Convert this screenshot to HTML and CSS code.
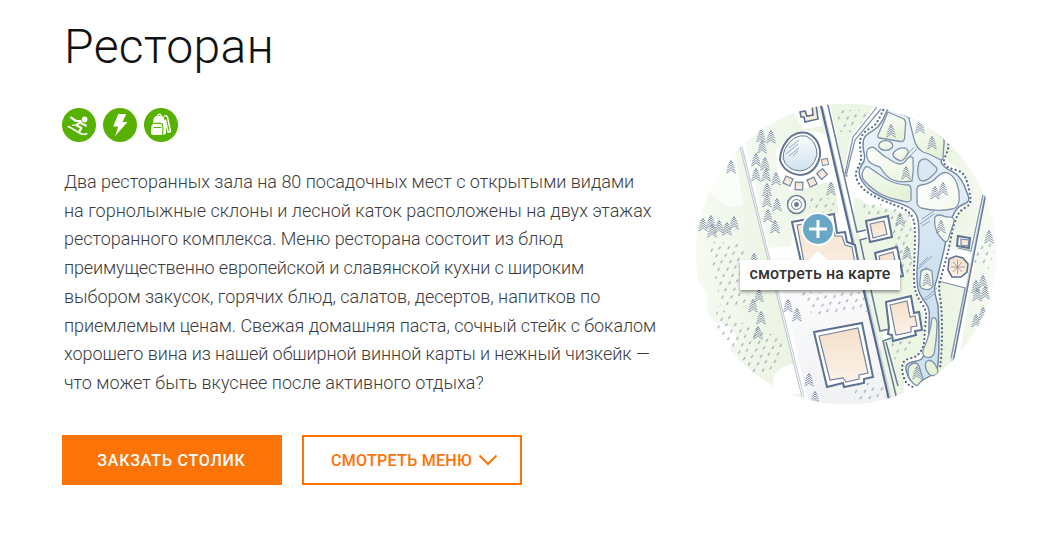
FILE: index.html
```html
<!DOCTYPE html>
<html lang="ru">
<head>
<meta charset="utf-8">
<title>Ресторан</title>
<link rel="stylesheet" href="styles.css">
</head>
<body>
<main class="page">
  <section class="info">
    <h1 class="title">Ресторан</h1>
    <div class="tags">
      <svg class="tag" viewBox="0 0 34 34"><circle cx="17" cy="17" r="17"/><circle class="w" cx="22.6" cy="11.4" r="2.8"/><path class="s" stroke-width="2.2" d="M9 9.500l5 3.500 4 0M18.800 13.500l-4.300 3.800 4.800 2.600-1.800 3.200M19.500 15.500l4.300 2"/><path class="s" stroke-width="1.7" d="M6.500 18.600c5 2 9 6.200 13.500 7.400 2 .6 3.500.5 4.700-.2"/><path class="s" stroke-width="1.200" d="M15 16.500l-4.500.8"/></svg>
      <svg class="tag" viewBox="0 0 34 34"><circle cx="17" cy="17" r="17"/><path class="w" d="M15.200 6h8l-3.700 8h5L12 28.300l3.200-9.800h-5z"/></svg>
      <svg class="tag" viewBox="0 0 34 34"><circle cx="17" cy="17" r="17"/><path class="s" stroke-width="1.500" d="M20.500 8q2.500-1 3.200 2l2.800 13.500-2.300.8-2.700-12"/><path class="w" d="M7.500 17.500l1.800-1.500V12q.5-3.500 3.700-4.200.5-2.300 2.500-2.300t2.200 2.300q2.300.7 2.800 3.700l1.700 6.500-.2 7.500-2.500 1.500H9q-2-.2-2-2z"/><path class="g" d="M9.800 19.500h7.500M9.800 15.500q4.500-1 8.700.5.800 5 .2 11M14.500 7.500h2"/></svg>
    </div>
    <div class="text">
      <div class="l1">Два ресторанных зала на 80 посадочных мест с открытыми видами</div>
      <div class="l2">на горнолыжные склоны и лесной каток расположены на двух этажах</div>
      <div class="l3">ресторанного комплекса. Меню ресторана состоит из блюд</div>
      <div class="l4">преимущественно европейской и славянской кухни с широким</div>
      <div class="l3">выбором закусок, горячих блюд, салатов, десертов, напитков по</div>
      <div class="l6">приемлемым ценам. Свежая домашняя паста, сочный стейк с бокалом</div>
      <div class="l6">хорошего вина из нашей обширной винной карты и нежный чизкейк —</div>
      <div class="l8">что может быть вкуснее после активного отдыха?</div>
    </div>
    <div class="actions">
      <a class="btn btn-fill">ЗАКЗАТЬ СТОЛИК</a>
      <a class="btn btn-line">СМОТРЕТЬ МЕНЮ<svg class="chev" viewBox="0 0 20 12"><path d="M1.500 1.500l8.500 8.500 8.500-8.500"/></svg></a>
    </div>
  </section>
  <aside class="map">
    <svg class="map-art" viewBox="695 104 302 300">
      <defs>
        <clipPath id="round"><circle cx="846.2" cy="254" r="150.5"/></clipPath>
        <linearGradient id="sand" x2="0" y2="1"><stop stop-color="#f5e0ca"/><stop offset="1" stop-color="#fbf2e8"/></linearGradient>
        <linearGradient id="water" x2="0" y2="1"><stop stop-color="#edf4f9"/><stop offset=".35" stop-color="#dfebf5"/><stop offset=".6" stop-color="#cde0ee"/><stop offset="1" stop-color="#cfe2ef"/></linearGradient>
        <linearGradient id="pool" x2="0" y2="1"><stop stop-color="#fafcfd"/><stop offset="1" stop-color="#cfe2ed"/></linearGradient>
        <linearGradient id="isle" x2="0.300" y2="1"><stop stop-color="#fff"/><stop offset="1" stop-color="#e6f2d8"/></linearGradient>
        <linearGradient id="plaza" x2="0" y2="1"><stop stop-color="#fff"/><stop offset="1" stop-color="#f1f2f4"/></linearGradient>
        <linearGradient id="lawn" x2="1" y2="0"><stop stop-color="#f6faf2"/><stop offset="1" stop-color="#eaf3e1"/></linearGradient>
        <linearGradient id="east" x2="1" y2="0"><stop stop-color="#e9f3df"/><stop offset="1" stop-color="#f9fcf7"/></linearGradient>
        <pattern id="grass" width="17" height="14" patternUnits="userSpaceOnUse" patternTransform="rotate(-8)"><path d="M2 5l2.200-2.500M10 4l2.200-2.500M6 12l2.200-2.500M14 11l2.200-2.500" stroke="#7f8ca5" stroke-width="1.100"/></pattern>
        <g id="tree"><path d="M-2.200 3q1.700-.7 2.200-2.500.5 1.800 2.200 2.500M-3.200 5.500q2.500-1 3.200-2.800.7 1.800 3.200 2.800M-3.800 8q3-1.200 3.800-3 .8 1.800 3.800 3M-4.300 10.500q3.400-1.200 4.300-3.200.9 2 4.300 3.200M-4.800 13q3.800-1.400 4.800-3.400 1 2 4.800 3.400"/></g>
        <g id="hut"><rect x="-3.800" y="-3.800" width="7.600" height="7.600"/></g>
      </defs>
      <g clip-path="url(#round)">
        <rect x="695" y="104" width="302" height="300" fill="#fff"/>
        <path fill="url(#plaza)" d="M773 248l75-10 46 166h-85z"/>
        <path fill="url(#lawn)" d="M695 190l45-55 64 269H695z"/>
        <path fill="#fbfdf9" d="M695 165q20 50 48 40l-9-60-25-10z"/>
        <path fill="#fff" d="M695 282q15 3 12 28l-12 15zM695 323c30-5 42 5 42 20-8 10-25 8-42 23zM773 381c0-10 12-16 20-17l8 30c-15 0-28-2-28-13z"/>
        <path fill="url(#lawn)" d="M744 136q40-35 77-32l18 110-44 4-4 28-22 2z"/>
        <path fill="#fff" d="M776 150q25-28 50-15l10 45-45 12-13-17zM789 104h28l6 22-20 3z"/>
        <path fill="#fff" d="M820 104h10l70 300h-12z"/>
        <path fill="#edf5e5" d="M830 104h46l-26 33-6 36zM854 199l9-7 15 10 28 10 8 18v60l14 35-5 28-18 9-2 44-12-6-12-44 2-14-8-6-20-88z"/>
        <path fill="#fff" d="M862 184q6 12 19 17l25 7-1 5-35-8-14-8z"/>
        <path fill="#fff" d="M858 232l10-4 1 9-7 3zM882 332l9-2 1 8-8 3z"/>
        <path fill="#edf5e5" d="M908 104l30 15 9 20-2 22-34-12z"/>
        <path fill="url(#east)" d="M948 138l36 37-1 20-12 56-23-2 10-37 15-15-13-27-17-12zM938 282l27 7-17 85-12-2zM985 200l15-10v110l-42 66z"/>
        <g fill="url(#grass)">
          <path d="M708 242h34l8 40-5 25h-24zM718 306l20 15 45 18-3 24-30 20-40-45zM837 110h36l-20 22-14 0zM860 202l15 0 36 12 2 62-14-3-6-35-12-5zM800 292h64l9 20-38 0-22 5zM889 341h27l-15 14-4 12zM856 383h27l5 18h-34zM970 260l8-15 20-5-10 30z"/>
          <path d="M809 198h24l2 12-25 5z"/>
        </g>
        <path class="thin" d="M740 147L802 397M742 147L804 397"/>
        <path class="faint" d="M823 108L891 399M984.500 196L951 362"/>
        <path class="thick" d="M820.700 104L890 404"/>
        <path class="line dark" d="M827.700 104L857 232l9-2M867 238l-7 2 20 91 10-2M891 338l-8 3L898 404M886 342l12 44"/>
        <path class="line" d="M877 107l-24 30-8 37M881 109l-26 31-9 36M848 176h-4"/>
        <path class="line dark" d="M986.700 189L953 362"/>
        <path class="line" d="M938 281l27 7-14 70M983 195l-12 56-13-3"/>
        <!-- river with islands -->
        <path fill="url(#water)" class="bank" d="M889 106C884 117 881 126 874 130S863 136 863 145 867 157 863 163 857 173 862 181 872 192 882 197 902 203 910 208 919 221 919 236 917 262 917 276 919 294 925 302 929 315 929 325 928 345 925 353 920 360 912 362 905 369 908 376 912 381 916 384L937 372C940 352 939 325 938 306 936 295 932 290 937 279L944 250 949 226C953 214 956 207 964 204S968 196 966 190 961 178 956 174 945 169 942 164 944 152 944 139L908 117z"/>
        <path class="dots" d="M885 106C880 117 877 125 871 128S859 136 860 146 862 157 860 163 853 173 858 182 870 194 880 199 900 206 907 211 915 223 915 236 914 262 914 276 916 295 922 304 926 316 925 328 925 345 921 351 915 357 908 359 901 370 904 378 909 384 914 388M948 140C950 150 945 155 944 160S947 168 956 170 967 180 969 190 972 204 965 208 957 215 953 228L948 252 940 281C938 290 940 294 941 304S943 345 940 368"/>
        <g class="isle">
          <path d="M888 112q9 4 16 7 2 2 1.500 6l-1 14q-1 3-4 2.500l-21-3.500q-3-1-1-4z"/>
          <path d="M910 116l28 14q7 4 6 12l-1 16q-1 3-4 1-9-5-16-7-7-4-9-13-2-8-5-20z"/>
          <ellipse cx="885.700" cy="145.500" rx="7" ry="4.800"/><path d="M894 152q5-5 11-4 5 2 2 7t-6 6q-11-4-7-9z"/>
          <path d="M868 149q5-4 9 1 6 6 12 9 7 5 11 5 4 0 7-5 4-4 6-1 1 12-1 23-12 2-19-1t-13-13q-10-2-13-9-1-6 1-9zM864 169q2-4 6-1 14 10 20 13 9 4 19 4 2 1 2 5v10q-2 3-8 1-16-3-24-8-11-7-16-14-2-5 1-10z"/>
          <path d="M917 189q0-3 4-4 10-1 16-8 6-6 11-4 7 4 9 11 3 8 2 17-1 7-7 8-15 3-31-1-4-2-4-6zM935 217q3-4 11 0 9-1 8 5l-6 18q-2 4-6-1-9-9-7-22zM921 271q5-4 11 0l1 15q-3 5-9 3-5 0-4-8zM932 318q4-2 5 5 0 14-3 31-3 5-8 3-4-1-3-7 7-14 9-32zM909 366q7-6 10 0l4 13-6 7q-12-7-8-20zM926 362q4-4 9 2 3 5 3 9-4 5-9 1-5-6-3-12z"/>
          <path class="lake" d="M919 162q4-5 9-2l8 7q3 3-3 8-8 8-13 5-4-5-1-18z"/>
        </g>
        <g stroke="#8da2b9" stroke-width="1"><path d="M922 219l12-8M920 224l14-10M922 226l8-5M919 266l9-9M918 269l14-13M920 273l7-6M908 154l6-7M910 156l7-7M922 301l15-13M926 300l8-6"/></g>
        <!-- buildings -->
        <g class="wall">
          <path d="M792 222l42-8 3 19 8-1 2 10 8 3 5 26-56 4z"/><path d="M814 332l48-9 11 54-9 2 0 4-20 4-1-4-16 4z"/><path d="M866 221l22-5 4 21-22 5z"/><path d="M875 253l22-6 6 29-22 5z"/><path d="M886 302l25-6 3 17 5-1 3 18-7 1 1 4-23 6-1-6-4-1 1-6z"/><path d="M958 236l12 2-1 10-12-2z"/>
        </g>
        <g class="house">
          <path class="oct" d="M800 112l5-1 2 5 6-1-1-10 4-1 2 15-13 3-1-5-3 0z"/>
          <path d="M797 225l34-6 4 17 7 0 3 9 7 2 4 22-50 4z"/><path d="M819 336l39-8 10 45-9 2 0 4-13 3-3-4-13 2z"/><path d="M870 224l14-3 3 13-14 4z"/><path d="M879 256l14-4 5 21-15 3z"/><path d="M890 305l17-4 3 16 5-1 2 10-6 1 0 5-15 3-1-4z"/><path d="M961 239l8 1-1 6-7-1z"/>
          <path class="oct" d="M949 259l7-3 7 2 5 6-1 8-6 5-9 0-4-7z"/>
          <use href="#hut" transform="translate(788 181) rotate(25)"/><use href="#hut" transform="translate(799 186) rotate(3)"/><use href="#hut" transform="translate(812 182) rotate(-25)"/><use href="#hut" transform="translate(822 174) rotate(-40)"/><use href="#hut" transform="translate(825 162) rotate(-12) scale(.8)"/>
        </g>
        <path stroke="#8c7f7c" stroke-width=".7" d="M957.500 260v14M951 267h14M953 262l9 10M953 272l9-10"/>
        <path d="M784 145q9-15 23-12 14 6 13 23-4 18-20 19-16-2-20-15 0-7 4-15z" fill="#fff" stroke="#657792" stroke-width="2"/><path d="M786 147q8-13 20-11 11 5 11 19-4 15-17 16-14-1-17-13 0-6 3-11z" fill="url(#pool)" stroke="#657792"/>
        <path stroke="#9aa6bb" stroke-width="1" d="M786 154l12-10M789 156l10-8M793 156l5-5M789 148l10-8"/>
        <g fill="#f8faf6" stroke="#71819a"><circle cx="796.500" cy="204.500" r="9" stroke-width="1.500"/><circle cx="796.500" cy="204.500" r="5"/><circle cx="796.500" cy="204.500" r="2" fill="#657792"/></g>
        <g class="trees">
          <use href="#tree" x="761" y="129"/><use href="#tree" x="771" y="130"/><use href="#tree" x="762" y="140"/><use href="#tree" x="756" y="153"/><use href="#tree" x="765" y="157"/><use href="#tree" x="756" y="168"/><use href="#tree" x="766" y="168"/><use href="#tree" x="776" y="172"/><use href="#tree" x="767" y="183"/><use href="#tree" x="767" y="194"/><use href="#tree" x="777" y="198"/><use href="#tree" x="768" y="209"/><use href="#tree" x="775" y="220"/><use href="#tree" x="731" y="160"/><use href="#tree" x="831" y="182"/>
          <use href="#tree" x="703" y="218"/><use href="#tree" x="711" y="215"/><use href="#tree" x="719" y="220"/><use href="#tree" x="712" y="224"/><use href="#tree" x="734" y="216"/><use href="#tree" x="727" y="222"/><use href="#tree" x="754" y="253"/><use href="#tree" x="759" y="289"/><use href="#tree" x="753" y="299"/><use href="#tree" x="761" y="311"/><use href="#tree" x="758" y="326"/><use href="#tree" x="788" y="299"/><use href="#tree" x="797" y="308"/><use href="#tree" x="809" y="373"/><use href="#tree" x="815" y="391"/>
          <use href="#tree" x="891" y="124"/><use href="#tree" x="920" y="120"/><use href="#tree" x="932" y="136"/><use href="#tree" x="906" y="166"/><use href="#tree" x="935" y="186"/><use href="#tree" x="943" y="182"/><use href="#tree" x="900" y="213"/><use href="#tree" x="907" y="246"/><use href="#tree" x="941" y="220"/><use href="#tree" x="927" y="273"/><use href="#tree" x="989" y="230"/><use href="#tree" x="976" y="280"/><use href="#tree" x="983" y="275"/><use href="#tree" x="977" y="288"/><use href="#tree" x="985" y="286"/><use href="#tree" x="976" y="314"/><use href="#tree" x="983" y="307"/><use href="#tree" x="917" y="366"/>
        </g>
      </g>
    </svg>
    <svg class="pin" viewBox="0 0 34 34"><circle cx="17" cy="17" r="17" fill="#fff"/><circle cx="17" cy="17" r="15" fill="#69a7c6"/><path d="M17 8v18M8 17h18" stroke="#fff" stroke-width="3"/></svg>
    <div class="tip">смотреть на карте</div>
  </aside>
</main>
</body>
</html>
```
FILE: styles.css
```css
body { margin: 0; background: #fff; font-family: Roboto, sans-serif; }
.page { display: grid; grid-template-columns: 633px 302px; padding-left: 62px; height: 544px; overflow: hidden; }
.title { margin: 19px 0 0 2px; font-size: 48px; line-height: 56px; font-weight: 300; color: #111; white-space: nowrap; letter-spacing: .4px; }
.tags { display: flex; gap: 7px; margin-top: 33px; height: 34px; }
.tag { width: 34px; height: 34px; fill: #56b100; }
.tag .w { fill: #fff; }
.tag .s { fill: none; stroke: #fff; stroke-linecap: round; stroke-linejoin: round; }
.tag .g { fill: none; stroke: #56b100; stroke-width: 1.1; }
.text { margin: 26px 0 0 2px; font-size: 18px; line-height: 28.7px; font-weight: 300; color: #3c3c3c; white-space: nowrap; }
.l1 { letter-spacing: -.01px; }
.l2 { letter-spacing: 0; }
.l3 { letter-spacing: -.03px; }
.l4 { letter-spacing: -.14px; }
.l6 { letter-spacing: -.065px; }
.l8 { letter-spacing: .02px; }
.actions { display: flex; gap: 20px; margin-top: 37.4px; }
.btn { box-sizing: border-box; width: 220px; height: 50px; display: flex; align-items: center; justify-content: center; font-size: 16px; font-weight: 500; border: 2px solid #fc7307; white-space: nowrap; }
.btn-fill { background: #fc7307; color: #fff; letter-spacing: .8px; padding-right: 1px; }
.btn-line { color: #fc7307; letter-spacing: .3px; padding-left: 5px; }
.chev { width: 20px; height: 12px; margin-left: 6px; fill: none; stroke: #fc7307; stroke-width: 2; }
.map { position: relative; margin-top: 104px; width: 302px; height: 300px; }
.map-art { display: block; width: 302px; height: 300px; fill: none; }
.thin { stroke: #b9c1d1; stroke-width: .9; }
.faint { stroke: #c9d0dc; stroke-width: 1.2; }
.line { stroke: #8090a8; stroke-width: 1.2; }
.dark { stroke: #677a98; stroke-width: 1.5; }
.thick { stroke: #566c8e; stroke-width: 2.2; }
.bank { stroke: #71849f; stroke-width: 1.4; stroke-linejoin: round; }
.dots { stroke: #536789; stroke-width: 2.3; stroke-linecap: round; stroke-dasharray: 0 4.2; }
.isle { fill: url(#isle); stroke: #8192ab; stroke-width: 1.3; }
.isle .lake { fill: #d9e8f3; }
.wall { fill: #fff; stroke: #5d7191; stroke-width: 2; }
.house { fill: url(#sand); stroke: #7383a0; stroke-width: 1.2; }
.house .oct { stroke: #5d7191; stroke-width: 1.6; }
.trees { stroke: #7c8aa4; stroke-width: .9; }
.pin { position: absolute; left: 106px; top: 108px; width: 34px; height: 34px; }
.tip { position: absolute; left: 45px; top: 156px; width: 160px; height: 30px; background: #fff; box-shadow: 0 2px 3px rgba(0,0,0,.4); font-size: 16px; line-height: 27px; font-weight: 500; letter-spacing: .12px; color: #333; text-align: center; white-space: nowrap; }
.tip::before { content: ""; position: absolute; left: 69px; top: -9px; border: 9px solid transparent; border-top: 0; border-bottom-color: #fff; }
```
